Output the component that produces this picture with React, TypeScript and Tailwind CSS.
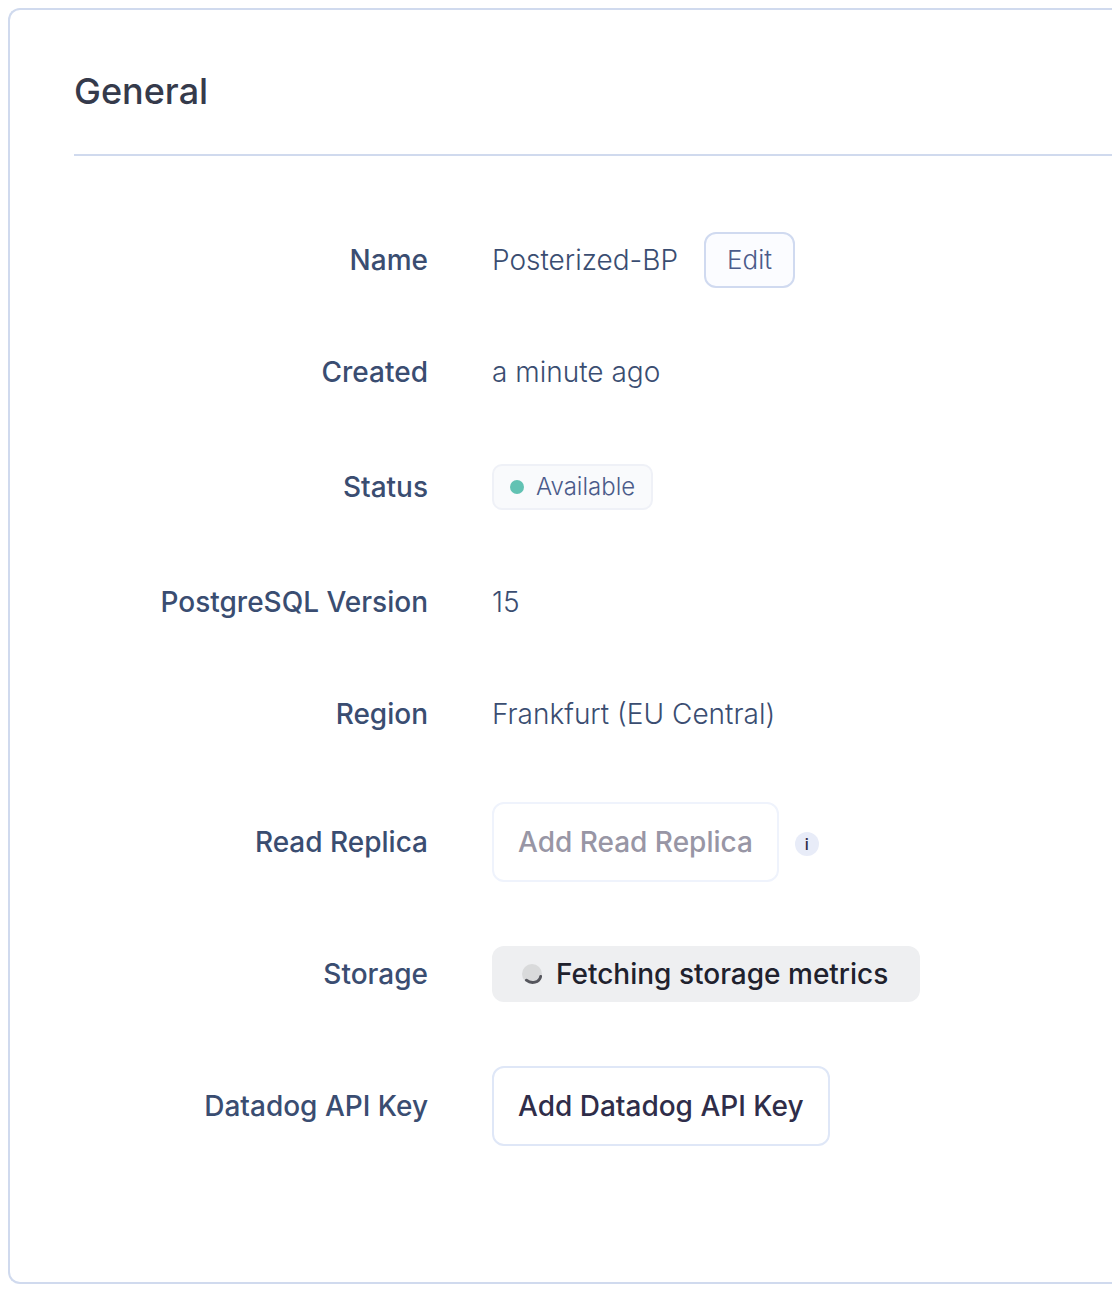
import type { ReactNode } from "react";

function Row({ label, className, children }: { label: string; className: string; children: ReactNode }) {
  return (
    <div className={`flex items-center gap-16 ${className}`}>
      <dt className="w-[354px] shrink-0 text-right font-medium">{label}</dt>
      <dd className="flex min-w-0 flex-1 items-center font-light whitespace-nowrap">{children}</dd>
    </div>
  );
}

function Spinner() {
  return (
    <svg viewBox="0 0 20 20" className="size-5" fill="none" aria-hidden="true">
      <circle cx="10" cy="10" r="10" fill="#d9dadb" />
      <path d="M4.4 16.2C9.5 20.2 17.5 18.8 18.7 12.3" stroke="#55565d" strokeWidth="2.8" strokeLinecap="round" />
    </svg>
  );
}

export default function App() {
  return (
    <main className="overflow-hidden bg-white py-2 pl-2 font-['Inter',sans-serif] text-[#3a4d71]">
      <section className="rounded-l-xl border-2 border-r-0 border-[#d0daee] pb-[136px] pl-16">
        <h2 className="border-b-2 border-[#d0daee] pt-[59px] pb-[41px] text-[36px] leading-[44px] font-medium text-[#353a4b]">
          General
        </h2>
        <dl className="flex flex-col pt-[76px] text-[28px] leading-[42px]">
          <Row label="Name" className="h-14">
            <span>Posterized-BP</span>
            <button type="button" className="ml-[26px] h-14 rounded-xl border-2 border-[#d0daf0] bg-[#fbfcff] px-[21px] text-[26px] text-[#4b5b8a]">Edit</button>
          </Row>
          <Row label="Created" className="mt-16 h-10">a minute ago</Row>
          <Row label="Status" className="mt-[72px] h-[46px]">
            <span className="flex h-[46px] items-center gap-3 rounded-[10px] border-2 border-[#eff1f7] bg-[#f9fafc] px-4 text-[24px] text-[#4b5b8a]">
              <span className="size-[14px] rounded-full bg-[#62c2b3]" />
              Available
            </span>
          </Row>
          <Row label="PostgreSQL Version" className="mt-[72px] h-10">15</Row>
          <Row label="Region" className="mt-[72px] h-10">Frankfurt (EU Central)</Row>
          <Row label="Read Replica" className="mt-[68px] h-20">
            <button type="button" disabled className="h-20 rounded-xl border-2 border-[#eff3fc] px-6 font-medium text-[#9896a5]">Add Read Replica</button>
            <button type="button" aria-label="About read replicas" className="mt-1 ml-4 grid size-6 place-items-center rounded-full bg-[#e8ecf8] text-[16px] leading-6 font-medium text-[#2b2a45]">i</button>
          </Row>
          <Row label="Storage" className="mt-16 h-14">
            <span role="status" className="flex h-14 items-center gap-[14px] rounded-xl bg-[#eeeff1] pr-8 pl-[30px] font-medium text-[#20212d]">
              <Spinner />
              Fetching storage metrics
            </span>
          </Row>
          <Row label="Datadog API Key" className="mt-16 h-20">
            <button type="button" className="h-20 rounded-xl border-2 border-[#dfe7f7] px-6 font-medium text-[#2f2d49]">Add Datadog API Key</button>
          </Row>
        </dl>
      </section>
    </main>
  );
}
